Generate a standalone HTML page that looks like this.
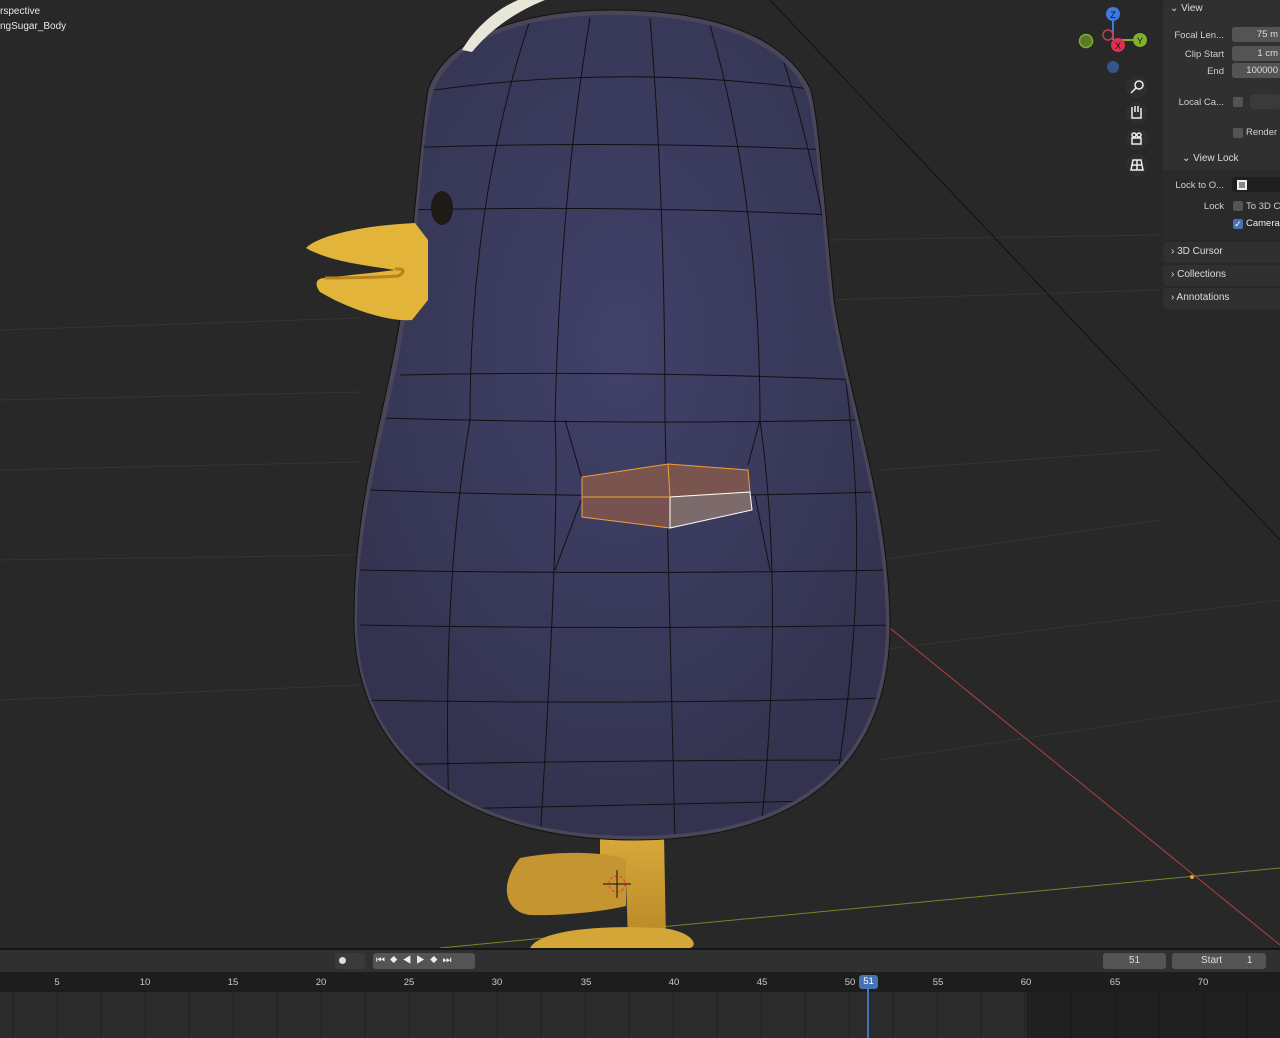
<!DOCTYPE html>
<html><head><meta charset="utf-8"><style>
*{margin:0;padding:0;box-sizing:border-box}
body{width:1280px;height:1038px;overflow:hidden;background:#282828;font-family:"Liberation Sans",sans-serif;position:relative}
.t{position:absolute;color:#e6e6e6;font-size:10px}
.panel{position:absolute;left:1163px;width:117px;background:#303030;border-radius:4px 0 0 4px}
.lbl{position:absolute;font-size:9.5px;color:#cfcfcf;text-align:right;width:60px}
.fld{position:absolute;left:1232px;width:48px;height:15px;background:#545454;border-radius:3px 0 0 3px;font-size:9.5px;color:#ddd;text-align:right;padding-right:2px;line-height:15px}
.cb{position:absolute;width:10px;height:10px;background:#545454;border-radius:2px}
.hd{position:absolute;font-size:10px;color:#ddd}
.tick{position:absolute;top:977px;font-size:9.5px;color:#ccc;transform:translateX(-50%)}
.btn{position:absolute;top:953px;height:16px;background:#545454;border-radius:3px}
</style></head><body>
<svg width="1280" height="950" style="position:absolute;left:0;top:0">
<defs>
<radialGradient id="bg" cx="0.5" cy="0.4" r="0.6"><stop offset="0" stop-color="#41416a"/><stop offset="1" stop-color="#33334f"/></radialGradient>
<clipPath id="bc"><path d="M615 15 C520 15 450 40 432 95 C420 150 418 250 405 320 C390 420 358 500 357 620 C357 760 470 836 635 836 C800 836 888 760 886 620 C884 500 845 400 830 300 C820 200 815 110 805 90 C780 40 710 15 615 15Z"/></clipPath>
<linearGradient id="ft" x1="0" x2="0" y1="0" y2="1"><stop offset="0" stop-color="#d8a83a"/><stop offset="1" stop-color="#b88a28"/></linearGradient>
</defs>
<g stroke="#343434" stroke-width="1" fill="none">
<path d="M0 330 L360 318 M0 400 L360 392 M0 560 L360 555 M0 700 L360 685 M0 470 L360 462 M880 560 L1160 520 M880 650 L1280 600 M880 760 L1280 700 M830 300 L1160 290 M830 240 L1160 235 M880 470 L1160 450"/>
</g>
<line x1="770" y1="0" x2="1280" y2="540" stroke="#111" stroke-width="1"/>
<line x1="880" y1="620" x2="1280" y2="945" stroke="#b04040" stroke-width="1"/>
<line x1="440" y1="948" x2="1280" y2="868" stroke="#6a8a2a" stroke-width="1"/>
<circle cx="1192" cy="877" r="2" fill="#f0a030"/>
<!-- feet -->
<path d="M600 836 L664 836 L666 940 L628 940 L626 880 L600 880Z" fill="url(#ft)"/>
<path d="M520 858 C560 850 610 852 626 860 L626 906 C600 912 560 916 530 915 C505 912 498 885 520 858Z" fill="#c49530"/>
<path d="M530 948 C540 930 600 925 660 928 C690 930 700 945 690 948Z" fill="#d4a537"/>
<!-- cage -->
<path d="M612 10 C515 10 445 40 428 90 C418 150 414 250 400 320 C384 420 354 500 354 620 C354 762 468 840 635 840 C803 840 892 762 890 620 C888 500 849 400 834 300 C824 200 818 110 810 88 C784 36 712 10 612 10Z" fill="#4a4658" stroke="#111" stroke-width="1"/>
<!-- body -->
<path d="M615 15 C520 15 450 40 432 95 C420 150 418 250 405 320 C390 420 358 500 357 620 C357 760 470 836 635 836 C800 836 888 760 886 620 C884 500 845 400 830 300 C820 200 815 110 805 90 C780 40 710 15 615 15Z" fill="url(#bg)"/>
<g clip-path="url(#bc)" stroke="#111" stroke-width="1" fill="none">
<path d="M400 95 Q620 60 830 92 M400 148 Q620 140 830 150 M400 210 Q620 205 830 215 M400 375 Q620 370 860 380 M380 418 Q620 425 860 420 M370 490 Q620 500 880 492 M360 570 Q620 575 890 570 M360 625 Q620 630 890 625 M360 700 Q620 705 890 698 M370 765 Q620 760 880 760 M400 810 Q620 805 860 800"/>
<path d="M530 20 Q470 200 470 420 Q440 600 450 840 M590 18 Q560 200 555 420 Q560 520 540 840 M650 18 Q665 200 665 420 Q670 600 675 840 M710 25 Q760 200 760 420 Q785 600 760 840 M780 50 Q830 200 850 420 Q870 600 830 820"/>
<path d="M565 420 L585 490 L555 570 M760 420 L748 465 M755 495 L770 570"/>
</g>
<!-- head feather -->
<path d="M462 50 C475 28 495 10 518 0 L545 0 C515 12 490 30 472 52Z" fill="#e8e6d8"/>
<!-- eye -->
<ellipse cx="442" cy="208" rx="11" ry="17" fill="#1e1a16"/>
<!-- beak -->
<path d="M306 248 C320 234 370 225 415 223 L428 240 L428 300 L412 320 C390 322 350 310 320 292 C314 284 316 278 325 278 C350 275 380 272 395 270 C370 266 330 262 306 248Z" fill="#e3b43a"/>
<path d="M395 269 C404 268 406 272 398 276 C370 278 340 278 325 278" fill="none" stroke="#b8821c" stroke-width="3"/>
<!-- selected face -->
<path d="M582 477 L668 464 L748 470 L750 492 L670 497 L582 497Z" fill="#7a5550" stroke="#f0a030" stroke-width="1"/>
<path d="M582 497 L670 497 L670 528 L582 517Z" fill="#775250" stroke="#f0a030" stroke-width="1"/>
<path d="M670 497 L750 492 L752 510 L670 528Z" fill="#7d6b6b" stroke="#fff" stroke-width="1"/>
<line x1="668" y1="464" x2="670" y2="497" stroke="#f0a030"/>
<!-- cursor -->
<circle cx="617" cy="884" r="8" fill="none" stroke="#e05040" stroke-width="1.5" stroke-dasharray="3 2"/>
<path d="M617 870 V898 M603 884 H631" stroke="#111" stroke-width="1"/>
<!-- gizmo -->
<line x1="1113" y1="14" x2="1113" y2="40" stroke="#3d7be0" stroke-width="2"/>
<line x1="1113" y1="40" x2="1139" y2="40" stroke="#80b030" stroke-width="2"/>
<circle cx="1108" cy="35" r="5" fill="none" stroke="#c04050" stroke-width="1.5"/>
<circle cx="1086" cy="41" r="6.5" fill="#5a7a2a" stroke="#80b030" stroke-width="1.5"/>
<circle cx="1113" cy="67" r="6" fill="#35558a"/>
<circle cx="1113" cy="14" r="7" fill="#3d7be0"/><text x="1113" y="18" font-size="9" fill="#111" text-anchor="middle" font-family="Liberation Sans">Z</text>
<circle cx="1140" cy="40" r="7" fill="#80b030"/><text x="1140" y="44" font-size="9" fill="#111" text-anchor="middle" font-family="Liberation Sans">Y</text>
<circle cx="1118" cy="45" r="7" fill="#e03050"/><text x="1118" y="49" font-size="9" fill="#111" text-anchor="middle" font-family="Liberation Sans">X</text>
<g fill="#2e2e2e"><circle cx="1137" cy="87" r="11"/><circle cx="1137" cy="113" r="11"/><circle cx="1137" cy="139" r="11"/><circle cx="1137" cy="165" r="11"/></g>
<g stroke="#eee" stroke-width="1.5" fill="none"><circle cx="1139" cy="85" r="4"/><path d="M1136 88 L1131 93"/><path d="M1132 107 V118 H1141 V108 M1135 106V112M1138 106V112"/><rect x="1132" y="138" width="9" height="6"/><circle cx="1134" cy="135" r="2"/><circle cx="1139" cy="135" r="2"/><path d="M1131 170 L1133 160 H1141 L1143 170Z M1137 160V170 M1132 165H1142"/></g>
</svg>
<div class="t" style="left:0;top:6px">rspective</div>
<div class="t" style="left:0;top:21px">ngSugar_Body</div>
<!-- panel -->
<div class="panel" style="top:0;height:240px"></div>
<div class="hd" style="left:1170px;top:3px">⌄ View</div>
<div class="lbl" style="left:1164px;top:30px">Focal Len...</div><div class="fld" style="top:27px">75 m</div>
<div class="lbl" style="left:1164px;top:49px">Clip Start</div><div class="fld" style="top:46px">1 cm</div>
<div class="lbl" style="left:1164px;top:66px">End</div><div class="fld" style="top:63px">100000</div>
<div class="lbl" style="left:1164px;top:97px">Local Ca...</div><div class="cb" style="left:1233px;top:97px"></div>
<div style="position:absolute;left:1250px;top:94px;width:30px;height:15px;background:#3a3a3a;border-radius:3px"></div>
<div class="cb" style="left:1233px;top:128px"></div><div class="lbl" style="left:1246px;top:127px;text-align:left">Render</div>
<div class="hd" style="left:1182px;top:153px">⌄ View Lock</div>
<div style="position:absolute;left:1163px;top:170px;width:117px;height:70px;background:#2a2a2a"></div>
<div class="lbl" style="left:1164px;top:180px">Lock to O...</div><div style="position:absolute;left:1232px;top:177px;width:48px;height:15px;background:#1e1e1e;border-radius:3px"></div>
<div style="position:absolute;left:1237px;top:180px;width:10px;height:10px;border:2px solid #eee;background:#888"></div>
<div class="lbl" style="left:1164px;top:201px">Lock</div><div class="cb" style="left:1233px;top:201px"></div><div class="lbl" style="left:1246px;top:201px;text-align:left">To 3D C</div>
<div class="cb" style="left:1233px;top:219px;background:#4772b3;color:#fff;font-size:9px;line-height:10px;text-align:center">✓</div><div class="lbl" style="left:1246px;top:218px;text-align:left;color:#eee">Camera</div>
<div class="panel" style="top:242px;height:21px"></div><div class="hd" style="left:1171px;top:246px">›  3D Cursor</div>
<div class="panel" style="top:265px;height:21px"></div><div class="hd" style="left:1171px;top:269px">›  Collections</div>
<div class="panel" style="top:288px;height:21px"></div><div class="hd" style="left:1171px;top:292px">›  Annotations</div>
<!-- timeline -->
<div style="position:absolute;left:0;top:948px;width:1280px;height:2px;background:#161616"></div>
<div style="position:absolute;left:0;top:950px;width:1280px;height:22px;background:#303030"></div>
<div class="btn" style="left:335px;width:30px;background:#3a3a3a"></div>
<div style="position:absolute;left:339px;top:957px;width:7px;height:7px;border-radius:50%;background:#ddd"></div>
<div class="btn" style="left:373px;width:102px;color:#eee;font-size:10px;line-height:16px;padding-left:3px;letter-spacing:1px">⏮ ◆ ◀ ▶ ◆ ⏭</div>
<div class="btn" style="left:1103px;width:63px;color:#ddd;font-size:10px;line-height:16px;text-align:center">51</div>
<div class="btn" style="left:1172px;width:94px;color:#ddd;font-size:10px;line-height:16px;padding-left:29px">Start <span style="margin-left:22px">1</span></div>
<div style="position:absolute;left:0;top:972px;width:1280px;height:20px;background:#1d1d1d"></div>
<div style="position:absolute;left:0;top:992px;width:1027px;height:46px;background:#2b2b2b;background-image:repeating-linear-gradient(90deg,transparent 0 12.5px,#222 12.5px 13.5px,transparent 13.5px 44px)"></div>
<div style="position:absolute;left:1027px;top:992px;width:253px;height:46px;background:#202020;background-image:repeating-linear-gradient(90deg,#1a1a1a 0 1px,transparent 1px 44px)"></div>
<div class="tick" style="left:57px">5</div><div class="tick" style="left:145px">10</div><div class="tick" style="left:233px">15</div><div class="tick" style="left:321px">20</div><div class="tick" style="left:409px">25</div><div class="tick" style="left:497px">30</div><div class="tick" style="left:586px">35</div><div class="tick" style="left:674px">40</div><div class="tick" style="left:762px">45</div><div class="tick" style="left:850px">50</div><div class="tick" style="left:938px">55</div><div class="tick" style="left:1026px">60</div><div class="tick" style="left:1115px">65</div><div class="tick" style="left:1203px">70</div>
<div style="position:absolute;left:867px;top:975px;width:2px;height:63px;background:#4772b3"></div>
<div style="position:absolute;left:859px;top:975px;width:19px;height:14px;background:#4772b3;border-radius:3px;color:#fff;font-size:9.5px;text-align:center;line-height:14px">51</div>
</body></html>
